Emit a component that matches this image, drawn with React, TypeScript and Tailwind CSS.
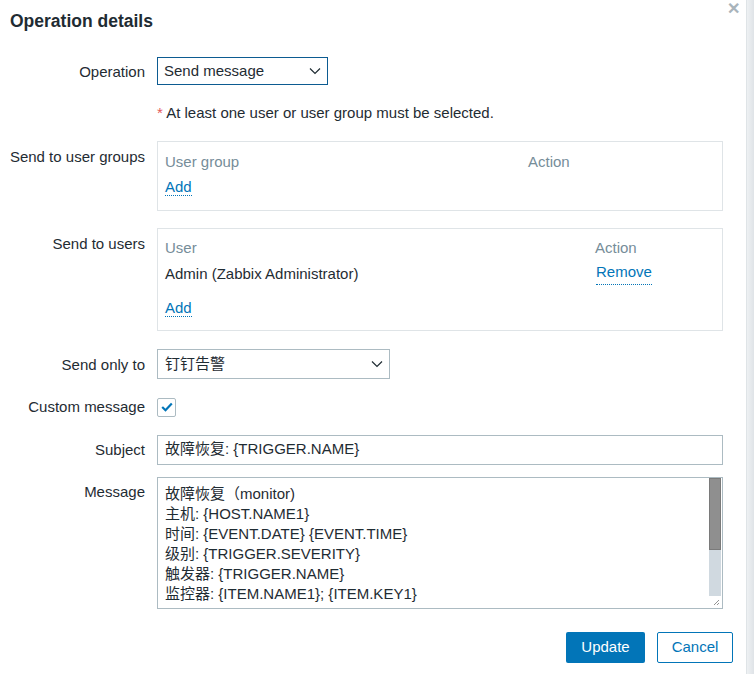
import React from 'react';

const font = { fontFamily: '"Liberation Sans", Arial, "Noto Sans CJK SC", sans-serif' };

const Chevron = () => (
  <svg width="12" height="8" viewBox="0 0 12 8" className="text-[#1f2c33]">
    <path d="M1 1.5 L6 6.5 L11 1.5" fill="none" stroke="currentColor" strokeWidth="1.2" />
  </svg>
);

const Link: React.FC<{ children: React.ReactNode }> = ({ children }) => (
  <span className="text-[#0275b8] border-b border-dotted border-[#0275b8] leading-[17px] inline-block">{children}</span>
);

const Label: React.FC<{ children: React.ReactNode; className?: string }> = ({ children, className = '' }) => (
  <div className={`w-[135px] shrink-0 flex justify-end whitespace-nowrap text-[#1f2c33] ${className}`}>
    <span>{children}</span>
  </div>
);

const messageLines = [
  '故障恢复（monitor)',
  '主机: {HOST.NAME1}',
  '时间: {EVENT.DATE} {EVENT.TIME}',
  '级别: {TRIGGER.SEVERITY}',
  '触发器: {TRIGGER.NAME}',
  '监控器: {ITEM.NAME1}; {ITEM.KEY1}',
];

export default function App() {
  return (
    <div className="w-[754px] h-[674px] flex bg-white text-[15px] overflow-hidden" style={font}>
      <div className="flex-1 relative border-r border-[#dfe4e7] pl-[10px] pr-[23px]">
        <button className="absolute right-[6px] top-[1px] text-[#a9b4bb] text-[16px] font-bold leading-none">✕</button>
        <h2 className="text-[17.5px] font-bold text-[#1f2c33] pt-[11px] leading-[21px]">Operation details</h2>

        {/* Operation */}
        <div className="flex gap-[12px] mt-[25px]">
          <Label className="pt-[4px]">Operation</Label>
          <div className="w-[171px] h-[28px] border border-[#0c5b91] flex items-center justify-between pl-[6px] pr-[6px] text-[#1f2c33]">
            <span className="pt-[1px]">Send message</span>
            <Chevron />
          </div>
        </div>

        <div className="ml-[147px] mt-[19px] h-[18px] leading-[18px] text-[#1f2c33]">
          <span className="text-[#e45959]">*</span> At least one user or user group must be selected.
        </div>

        {/* User groups */}
        <div className="flex gap-[12px] mt-[19px]">
          <Label className="pt-[5px]">Send to user groups</Label>
          <div className="w-[566px] h-[70px] border border-[#dfe4e7] px-[7px] pt-[9px]">
            <div className="flex text-[#768d99]">
              <span className="w-[363px]">User group</span>
              <span>Action</span>
            </div>
            <div className="mt-[2px]"><Link>Add</Link></div>
          </div>
        </div>

        {/* Users */}
        <div className="flex gap-[12px] mt-[17px]">
          <Label className="pt-[5px]">Send to users</Label>
          <div className="w-[566px] h-[103px] border border-[#dfe4e7] px-[7px] pt-[8px]">
            <div className="flex text-[#768d99]">
              <span className="w-[430px]">User</span>
              <span>Action</span>
            </div>
            <div className="flex pt-[3px] text-[#1f2c33]">
              <span className="w-[431px]">Admin (Zabbix Administrator)</span>
              <Link>Remove</Link>
            </div>
            <div className="mt-[12px]"><Link>Add</Link></div>
          </div>
        </div>

        {/* Send only to */}
        <div className="flex gap-[12px] mt-[18px]">
          <Label className="pt-[5px]">Send only to</Label>
          <div className="w-[233px] h-[30px] border border-[#acbbc2] flex items-center justify-between pl-[7px] pr-[6px] text-[#1f2c33]">
            <span>钉钉告警</span>
            <Chevron />
          </div>
        </div>

        {/* Custom message */}
        <div className="flex gap-[12px] mt-[17px] items-center">
          <Label>Custom message</Label>
          <div className="w-[19px] h-[19px] border border-[#acbbc2] rounded-[2px] flex items-center justify-center">
            <svg width="12" height="10" viewBox="0 0 12 10">
              <path d="M1.2 5 L4.5 8.2 L10.8 1.5" fill="none" stroke="#0275b8" strokeWidth="2.2" />
            </svg>
          </div>
        </div>

        {/* Subject */}
        <div className="flex gap-[12px] mt-[16px]">
          <Label className="pt-[4px]">Subject</Label>
          <div className="w-[566px] h-[30px] border border-[#acbbc2] flex items-center pl-[7px] text-[#1f2c33]">
            故障恢复: {'{TRIGGER.NAME}'}
          </div>
        </div>

        {/* Message */}
        <div className="flex gap-[12px] mt-[12px]">
          <Label className="pt-[4px]">Message</Label>
          <div className="w-[566px] h-[132px] border border-[#acbbc2] flex relative">
            <div className="flex-1 pl-[7px] pt-[6px] text-[#1f2c33] leading-[20px] overflow-hidden">
              {messageLines.map((l) => (
                <div key={l} className="whitespace-pre">{l}</div>
              ))}
            </div>
            <div className="w-[12px] h-[118px] bg-[#d0d9e0] flex flex-col mr-[1px]">
              <div className="h-[72px] bg-[#8f8f8f] border border-[#7a7a7a]" />
            </div>
            <svg className="absolute right-[2px] bottom-[2px]" width="7" height="7" viewBox="0 0 7 7">
              <path d="M1 6 L6 1 M4 6 L6 4" stroke="#777" strokeWidth="0.8" />
            </svg>
          </div>
        </div>

        {/* Buttons */}
        <div className="flex justify-end gap-[12px] mt-[23px] -mr-[10px]">
          <button className="w-[79px] h-[31px] bg-[#0275b8] text-white rounded-[2px]">Update</button>
          <button className="w-[76px] h-[31px] border border-[#0275b8] text-[#0275b8] rounded-[2px] bg-white">Cancel</button>
        </div>
      </div>
      <div className="w-[8px] h-full bg-gradient-to-r from-[#eef1f3] to-[#dfe3e7]" />
    </div>
  );
}
